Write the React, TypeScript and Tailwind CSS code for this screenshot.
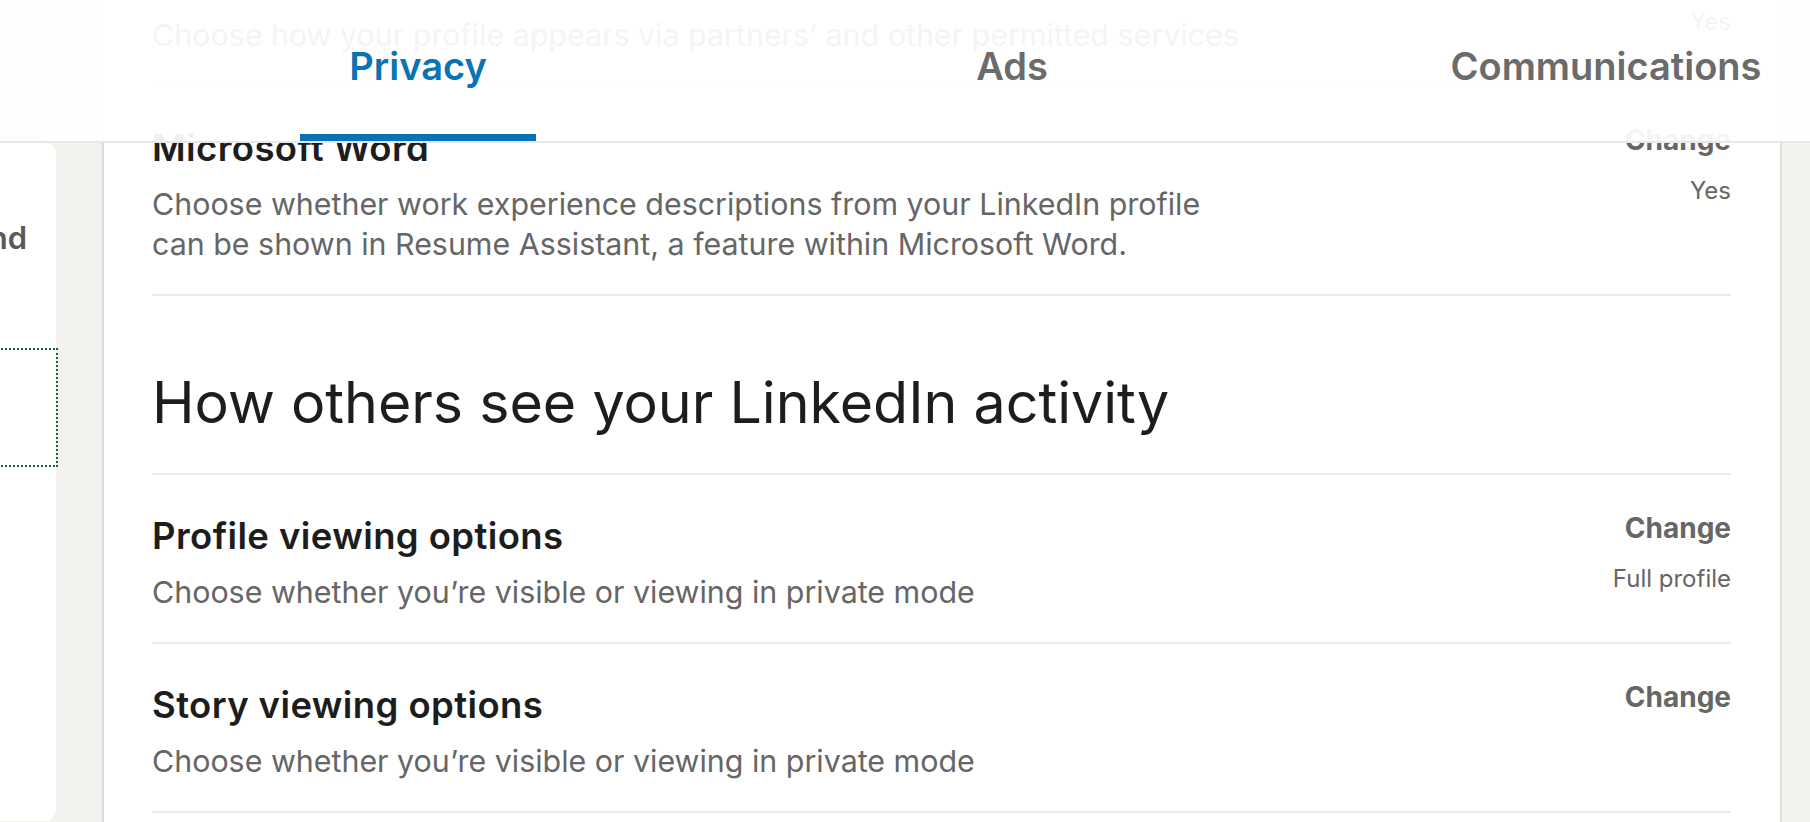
import React from 'react';

type Row = {
  title: string;
  description: string;
  value?: string;
};

const topRows: Row[] = [
  {
    title: "Profile visibility off LinkedIn",
    description: "Choose how your profile appears via partners’ and other permitted services",
    value: "Yes",
  },
  {
    title: "Microsoft Word",
    description:
      "Choose whether work experience descriptions from your LinkedIn profile can be shown in Resume Assistant, a feature within Microsoft Word.",
    value: "Yes",
  },
];

const activityRows: Row[] = [
  {
    title: "Profile viewing options",
    description: "Choose whether you’re visible or viewing in private mode",
    value: "Full profile",
  },
  {
    title: "Story viewing options",
    description: "Choose whether you’re visible or viewing in private mode",
  },
  {
    title: "Who can see or download your email address",
    description: "Choose who can see your email address on your profile",
    value: "Connections",
  },
];

const tabs = ["Privacy", "Ads", "Communications"];

const SettingRow: React.FC<{ row: Row }> = ({ row }) => (
  <div className="flex justify-between border-b-2 border-[#e8eaed]">
    <div className="max-w-[1102px] pt-[39px] pb-[30px]">
      <h3 className="text-[36.5px] leading-[45px] font-semibold tracking-[0.4px] text-[#1d1d1d]">{row.title}</h3>
      <p className="mt-[13px] text-[30.4px] leading-[40px] text-[#666666]">{row.description}</p>
    </div>
    <div className="flex flex-col items-end pt-[33px]">
      <button className="text-[28px] leading-[40px] font-bold text-[#666666]">Change</button>
      {row.value && (
        <span className="mt-[15px] text-[24px] leading-[32px] text-[#666666]">{row.value}</span>
      )}
    </div>
  </div>
);

const App: React.FC = () => {
  return (
    <div className="relative h-[822px] w-full overflow-hidden bg-[#f3f2ef] font-['Inter','Liberation_Sans',sans-serif]">
      <div className="flex h-full">
        {/* left nav card, mostly scrolled out of view */}
        <div className="mt-[143px] mb-[1px] w-[56px] shrink-0 rounded-r-[11px] bg-white">
          <div className="flex justify-end overflow-hidden pr-[29px] pt-[75px]">
            <span className="whitespace-nowrap text-[31px] leading-[40px] font-semibold text-[#5a5a5a]">
              Blocking and
            </span>
          </div>
          <div className="mt-[92px] h-[115px] w-full outline-2 outline-dotted outline-[#0b6a3d]" />
        </div>

        {/* main settings panel */}
        <main className="ml-[46px] w-[1680px] shrink-0 border-x-2 border-[#dcdcdc] bg-white pl-[48px] pr-[49px]">
          <div className="-mt-[82px]">
            {topRows.map((row) => (
              <SettingRow key={row.title} row={row} />
            ))}
            <div className="border-b-2 border-[#e8eaed] pt-[70px] pb-[35px]">
              <h2 className="text-[57.3px] leading-[72px] font-normal text-[#1d1d1d]">
                How others see your LinkedIn activity
              </h2>
            </div>
            {activityRows.map((row) => (
              <SettingRow key={row.title} row={row} />
            ))}
          </div>
        </main>
      </div>

      {/* sticky tab bar */}
      <header className="absolute inset-x-0 top-0 h-[143px] border-b-2 border-[#e6e9ec] bg-white/[0.93]">
        <nav className="ml-[121px] flex h-full">
          {tabs.map((tab, idx) => (
            <div key={tab} className="flex w-[594px] shrink-0 justify-center">
              <div
                className={`relative h-full px-[49px] pt-[47px] text-[38px] leading-[38px] font-semibold ${
                  idx === 0 ? 'text-[#0a73b3]' : 'text-[#6b6b6b]'
                }`}
              >
                {tab}
                {idx === 0 && <span className="absolute inset-x-0 bottom-0 h-[7px] bg-[#0a73b3]" />}
              </div>
            </div>
          ))}
        </nav>
      </header>
    </div>
  );
};

export default App;
